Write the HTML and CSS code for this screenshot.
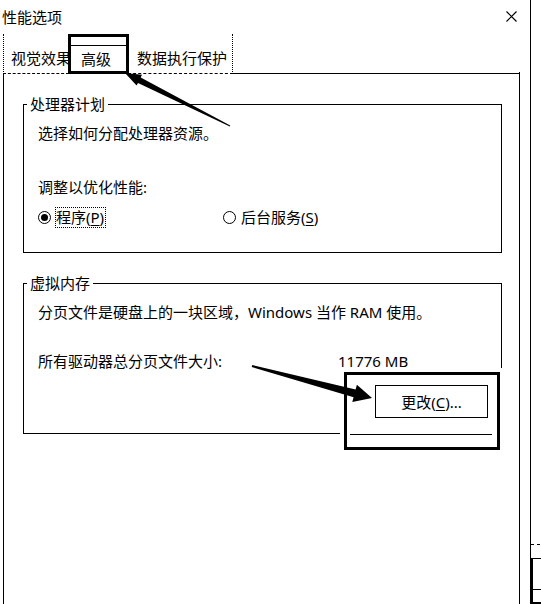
FILE: index.html
```html
<!DOCTYPE html>
<html lang="zh-CN">
<head>
<meta charset="utf-8">
<title>性能选项</title>
<link rel="stylesheet" href="styles.css">
</head>
<body>
<div class="screen">
  <div class="dialog">
    <div class="titlebar">
      <span class="title">性能选项</span>
      <svg class="close" width="11" height="11" viewBox="0 0 11 11"><path d="M0.5 0.5 L10.5 10.5 M10.5 0.5 L0.5 10.5" stroke="#000" stroke-width="1.2" fill="none"/></svg>
    </div>
    <div class="tabstrip">
      <div class="tab tab-first">视觉效果</div>
      <div class="tab tab-active">高级</div>
      <div class="tab tab-last">数据执行保护</div>
      <div class="tab-fill"></div>
    </div>
    <div class="panel">
      <fieldset class="group group-cpu">
        <legend>处理器计划</legend>
        <div class="group-body">
          <p class="line cpu-intro">选择如何分配处理器资源。</p>
          <p class="line cpu-adjust">调整以优化性能:</p>
          <div class="radios">
            <div class="radio"><span class="dot checked"></span><span class="focus">程序(<u>P</u>)</span></div>
            <div class="radio"><span class="dot"></span><span class="rlabel">后台服务(<u>S</u>)</span></div>
          </div>
        </div>
      </fieldset>
      <fieldset class="group group-vm">
        <legend>虚拟内存</legend>
        <div class="group-body">
          <p class="line vm-intro">分页文件是硬盘上的一块区域，Windows 当作 RAM 使用。</p>
          <div class="line vm-size"><span>所有驱动器总分页文件大小:</span><span>11776 MB</span></div>
          <div class="btn-row"><button class="btn">更改(<u>C</u>)...</button></div>
        </div>
      </fieldset>
    </div>
  </div>
  <div class="behind">
    <div class="b-dash"></div>
    <div class="b-box"><div class="b-inner"></div></div>
  </div>
  <div class="mark mark-tab"></div>
  <div class="mark mark-btn"></div>
  <svg class="arrows" width="541" height="604" viewBox="0 0 541 604">
    <polygon points="125,73 142,74.8 140.7,77.5 230.2,125.6 229.8,126.4 138,82.9 136.6,85.6" fill="#000"/>
    <polygon points="372,398 356.9,384.7 355.6,389.5 252.3,365 251.7,367 353.6,397.3 352.3,402.1" fill="#000"/>
  </svg>
</div>
</body>
</html>
```
FILE: styles.css
```css
* { box-sizing: border-box; }
html, body { margin: 0; padding: 0; background: #fff; }
body {
  font-family: "Noto Sans", "Noto Sans CJK SC", sans-serif;
  font-size: 15px;
  color: #000;
  width: 541px;
  height: 604px;
  overflow: hidden;
}
.screen {
  position: relative;
  display: flex;
  width: 541px;
  height: 604px;
}
.dialog {
  width: 531px;
  height: 604px;
  border-right: 1px solid #000;
  display: flex;
  flex-direction: column;
}
.titlebar {
  height: 34px;
  display: flex;
  align-items: center;
  justify-content: space-between;
  padding-left: 2px;
  padding-right: 13px;
  line-height: 20px;
}
.close { display: block; margin-top: -2px; }
.tabstrip {
  display: flex;
  align-items: flex-end;
  margin-left: 3px;
  width: 517px;
  height: 40px;
}
.tab {
  height: 40px;
  line-height: 20px;
  padding-top: 14px;
  white-space: nowrap;
}
.tab-first {
  width: 66px;
  padding-left: 7px;
  border-left: 1px dotted #000;
  border-bottom: 1px dashed #000;
}
.tab-active {
  width: 59px;
  padding-left: 12px;
  border-top: 1px solid #000;
  margin-top: 11px;
  height: 29px;
  padding-top: 3px;
}
.tab-last {
  width: 105px;
  padding-left: 9px;
  border-right: 1px dotted #000;
  border-bottom: 1px dashed #000;
}
.tab-fill {
  flex: 1;
  height: 40px;
  border-bottom: 1px solid #000;
  border-right: 1px dotted #000;
  margin-bottom: 0;
}
.tab-fill { height: 2px; }
.panel {
  margin-left: 3px;
  width: 517px;
  flex: 1;
  border-left: 1px solid #000;
  border-right: 1px solid #000;
  padding: 20px 17px 0 19px;
}
.group {
  margin: 0;
  padding: 0;
  min-width: 0;
  border: 1px solid #000;
  width: 479px;
}
.group legend {
  padding: 0 3px;
  margin-left: 3px;
  line-height: 20px;
}
.group-body { padding-left: 14px; }
.line { margin: 0; line-height: 20px; }
.group-cpu .group-body { padding-bottom: 24px; }
.cpu-intro { margin-top: 9px; }
.cpu-adjust { margin-top: 34px; }
.radios {
  margin-top: 10px;
  display: grid;
  grid-template-columns: 185px auto;
  height: 21px;
}
.radio {
  display: flex;
  align-items: center;
  gap: 4px;
  line-height: 19px;
}
.dot {
  width: 13px;
  height: 13px;
  border: 1px solid #000;
  border-radius: 50%;
  display: flex;
  align-items: center;
  justify-content: center;
}
.dot.checked::after {
  content: "";
  width: 7px;
  height: 7px;
  border-radius: 50%;
  background: #000;
}
.focus { border: 1px dotted #000; padding-right: 1px; }
.rlabel { padding-left: 1px; }
u { text-decoration: underline; text-underline-offset: 2px; }
.group-vm { margin-top: 20px; }
.group-vm .group-body { padding-bottom: 15px; }
.vm-intro { margin-top: 9px; }
.vm-size {
  margin-top: 29px;
  display: grid;
  grid-template-columns: 300px auto;
}
.btn-row {
  margin-top: 14px;
  display: flex;
  justify-content: flex-end;
  padding-right: 13px;
}
.btn {
  position: relative;
  z-index: 3;
  width: 113px;
  height: 33px;
  border: 1px solid #000;
  background: #fff;
  font: inherit;
  color: #000;
  padding: 0;
  line-height: 20px;
}
.behind {
  width: 10px;
  padding-top: 544px;
}
.b-dash { border-top: 1px dashed #000; width: 9px; }
.b-box {
  margin-top: 13px;
  height: 47px;
  border-top: 1px solid #000;
  border-left: 2px solid #000;
  border-bottom: 3px solid #000;
}
.b-inner { height: 31px; border-bottom: 1px solid #000; }
.mark {
  position: absolute;
  border: 3px solid #000;
}
.mark-tab {
  left: 68px;
  top: 34px;
  width: 61px;
  height: 40px;
}
.mark-btn {
  left: 344px;
  top: 372px;
  width: 156px;
  height: 78px;
  background: #fff;
  box-shadow: 0 0 0 4px #fff;
  z-index: 2;
}
.mark-btn::after {
  content: "";
  position: absolute;
  left: 3px;
  top: 59px;
  width: 142px;
  border-top: 1px solid #000;
}
.arrows {
  position: absolute;
  left: 0;
  top: 0;
  z-index: 4;
  pointer-events: none;
}
```
